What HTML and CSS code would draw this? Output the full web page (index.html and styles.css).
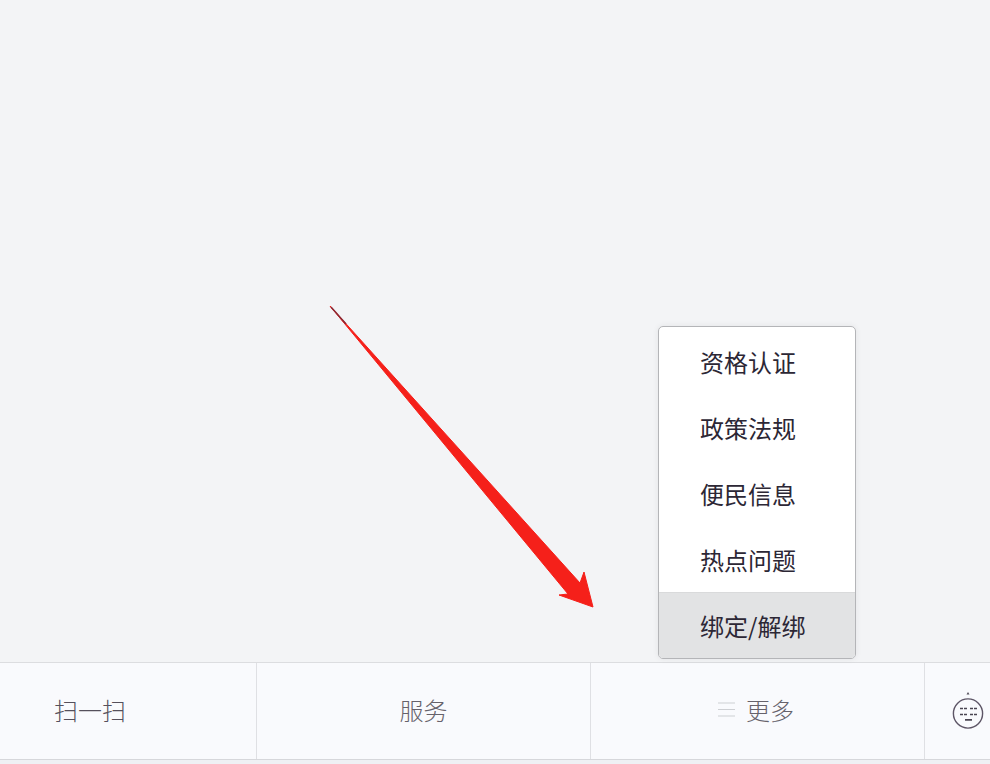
FILE: index.html
```html
<!DOCTYPE html>
<html lang="zh-CN">
<head>
<meta charset="utf-8">
<title>更多</title>
<link rel="stylesheet" href="styles.css">
</head>
<body>
<div class="page">
  <main class="stage"></main>
  <nav class="bar">
    <div class="cell cell-scan"><span class="label">扫一扫</span></div>
    <div class="cell cell-mid"><span class="label">服务</span></div>
    <div class="cell cell-mid cell-more">
      <svg class="more-icon" width="17" height="15" viewBox="0 0 17 15"><path d="M0 1h17M0 7.500h17M0 14h17" stroke="#cdcfd3" stroke-width="1.200" fill="none"/></svg>
      <span class="label">更多</span>
    </div>
    <div class="cell cell-kbd">
      <svg width="34" height="40" viewBox="0 0 34 40">
        <path d="M14.500 3.500l1.500-2.500 1.500 2.500z" fill="#55505c"/>
        <circle cx="16" cy="22.500" r="14.600" fill="none" stroke="#5d5566" stroke-width="1.400"/>
        <path d="M8 17.500h3M12 17.500h3M18 17.500h3M22 17.500h3M8 23.500h3M12 23.500h3M18 23.500h3M22 23.500h3M13 28.800h7" stroke="#4a4552" stroke-width="1.700" fill="none"/>
      </svg>
    </div>
  </nav>
  <div class="foot"></div>
  <ul class="menu">
    <li class="menu-item">资格认证</li>
    <li class="menu-item">政策法规</li>
    <li class="menu-item">便民信息</li>
    <li class="menu-item">热点问题</li>
    <li class="menu-item menu-item-active">绑定/解绑</li>
  </ul>
  <svg class="arrow" width="990" height="764" viewBox="0 0 990 764">
    <polygon points="330,306 580,583 584,572 593,607 559,595 568,594" fill="#f5201a" stroke="#f5201a" stroke-width="1" stroke-linejoin="round"/>
    <path d="M331 307L346 324" stroke="#8a2a35" stroke-width="1.500"/>
  </svg>
</div>
</body>
</html>
```

FILE: styles.css
```css
* { box-sizing: border-box; }
html, body { margin: 0; padding: 0; }
body {
  background: #f3f4f6;
  font-family: "Noto Sans CJK SC", "Liberation Sans", sans-serif;
  color: #2c2735;
  overflow: hidden;
}
.page {
  position: relative;
  width: 990px;
  height: 764px;
  display: flex;
  flex-direction: column;
}
.stage { flex: 1; }
.bar {
  height: 98px;
  display: flex;
  background: #f9fafd;
  border-top: 1px solid #dcdde0;
  border-bottom: 1px solid #d6d7db;
}
.foot { height: 4px; background: #eff0f4; }
.cell {
  display: flex;
  align-items: center;
  font-size: 24px;
  font-weight: 300;
  color: #55505c;
  border-right: 1px solid #dfe0e4;
}
.label { display: block; margin-top: -4px; }
.cell-scan { width: 257px; padding-left: 54px; }
.cell-mid { width: 334px; justify-content: center; color: #66626b; }
.cell-more { gap: 11px; padding-right: 3px; }
.more-icon { display: block; margin-top: -3px; }
.cell-kbd { flex: 1; border-right: 0; padding-left: 27px; }
.menu {
  position: absolute;
  left: 658px;
  top: 326px;
  width: 198px;
  height: 333px;
  margin: 0;
  padding: 0;
  list-style: none;
  background: #fff;
  border: 1px solid #b4b5b8;
  border-radius: 5px;
  box-shadow: 0 0 6px rgba(0, 0, 0, .07);
  overflow: hidden;
  display: flex;
  flex-direction: column;
  justify-content: flex-end;
}
.menu-item {
  height: 66px;
  display: flex;
  align-items: center;
  padding-left: 41px;
  font-size: 24px;
  font-weight: 400;
  color: #2c2735;
}
.menu-item-active { background: #e2e3e4; border-top: 1px solid #d9dadb; }
.arrow {
  position: absolute;
  left: 0;
  top: 0;
  pointer-events: none;
}
```
